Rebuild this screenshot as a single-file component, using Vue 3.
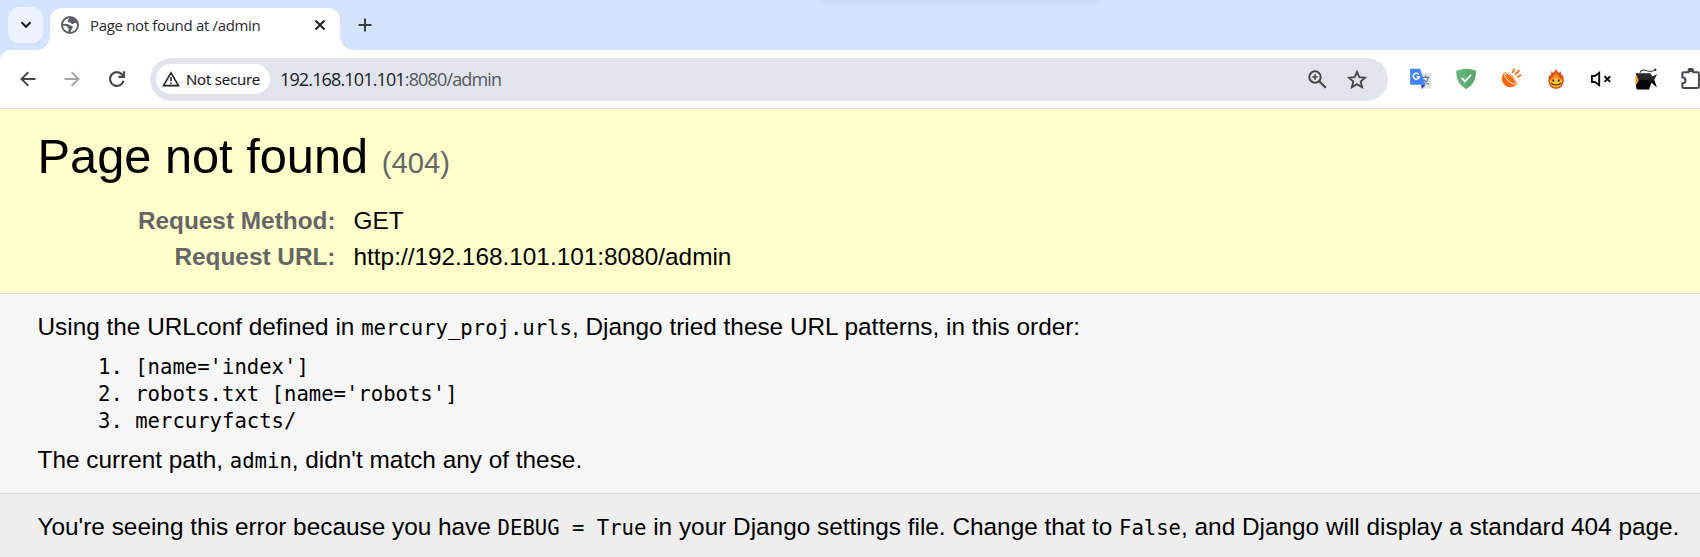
<script setup>
const patterns = ["[name='index']", "robots.txt [name='robots']", 'mercuryfacts/']
</script>

<template>
  <div class="window">
    <header class="tabstrip">
      <div class="shade"></div>
      <button class="tabsearch" aria-label="Search tabs">
        <svg width="12" height="12" viewBox="0 0 12 12"><path d="M1.500 3.200 6 7.700l4.500-4.500" fill="none" stroke="#1c1d20" stroke-width="2.100" /></svg>
      </button>
      <div class="tab">
        <svg class="curve left" width="14" height="14" viewBox="0 0 14 14"><path d="M14 0v14H0A14 14 0 0 0 14 0Z" fill="#fff" /></svg>
        <svg class="globe" width="18" height="18" viewBox="0 0 18 18">
          <circle cx="9" cy="9" r="9" fill="#5c6066" />
          <path d="M8.600 2.200C7.900 3.300 6.500 3.600 6.600 5c.1 1.200 1.200 1.300 2.500 1.400 1 .1.900 1.500 2.100 1.700 1.700.2 1.800-1.500 3.100-1.300 1.400.3 1.900 1.700 1.700 3.200-.5 3.200-2.900 5.600-6.200 6l.1-1.800c1.300-.5.900-1.800 1.800-2.600.5-1-.5-2-1.900-2.200C8.200 9.200 7.900 7.900 6 7.900H2.100C2.600 4.800 5 2.300 8.600 2.200Z" fill="#fff" />
          <path d="M2 9.800h2.700c1.400 0 1.700.8 1.800 1.700.1.900 1.300.9 1.300 1.900 0 .9-.6 1.200-.5 2.400C4.300 15.100 2.200 12.800 2 9.800Z" fill="#fff" />
        </svg>
        <span class="title">Page not found at /admin</span>
        <svg class="close" width="12" height="12" viewBox="0 0 12 12"><path d="m1.500 1.500 9 9m0-9-9 9" stroke="#1c1d20" stroke-width="1.900" /></svg>
        <svg class="curve right" width="14" height="14" viewBox="0 0 14 14"><path d="M0 0v14h14A14 14 0 0 1 0 0Z" fill="#fff" /></svg>
      </div>
      <svg class="plus" width="14" height="14" viewBox="0 0 14 14"><path d="M7 .5v13M.5 7h13" stroke="#3c4043" stroke-width="2" /></svg>
    </header>

    <nav class="toolbar">
      <svg class="back" width="16" height="16" viewBox="0 0 16 16"><path d="M15.500 8H2M8.300 1.200 1.500 8l6.800 6.800" fill="none" stroke="#46484b" stroke-width="2" /></svg>
      <svg class="forward" width="16" height="16" viewBox="0 0 16 16"><path d="M.5 8H14M7.700 1.200 14.500 8l-6.800 6.800" fill="none" stroke="#a5a6a8" stroke-width="2" /></svg>
      <svg class="reload" width="18" height="18" viewBox="0 0 18 18"><path d="M15.600 10.700A6.900 6.900 0 1 1 14.200 4.600L15.800 6.500M16 1.300v5.600h-5.600" fill="none" stroke="#46484b" stroke-width="2.200" /></svg>
      <div class="address">
        <div class="chip">
          <svg width="18" height="16" viewBox="0 0 18 16"><path d="M9 1.800 16.500 14.600h-15Z" fill="none" stroke="#1f2023" stroke-width="1.600" /><path d="M9 6v4.300M9 11.400v1.500" stroke="#1f2023" stroke-width="1.500" /></svg>
          <span>Not secure</span>
        </div>
        <div class="url"><b>192.168.101.101</b>:8080/admin</div>
        <svg class="magnify" width="19" height="19" viewBox="0 0 19 19"><g fill="none" stroke="#46484b" stroke-width="2"><circle cx="7" cy="7" r="5.700" /><path d="m11.200 11.200 6.600 6.600" stroke-width="2.300" /><path d="M7 4.200v5.600M4.200 7h5.600" stroke-width="1.600" /></g></svg>
        <svg class="star" width="20" height="19" viewBox="0 0 20 19"><path d="m10 1.900 2.300 5.300 5.800.5-4.400 3.800 1.400 5.700-5.100-3.100-5.100 3.100 1.400-5.700L1.900 7.700l5.800-.5Z" fill="none" stroke="#46484b" stroke-width="1.900" /></svg>
      </div>
      <div class="extensions">
        <svg width="22" height="22" viewBox="0 0 22 22">
          <path d="M8 5h12.300c.6 0 1 .4 1 1v13.600c0 .6-.4 1-1 1H11Z" fill="#dfe1e4" />
          <path d="m11 16.500 4.500.3-3.500 4.200Z" fill="#3646a8" />
          <path d="M12.500 9.300h7M15.700 7.500v1.800M18.300 9.500c-.5 3-2.300 5.100-4 6.300M14.200 11.800c1 2 2.700 3.500 4.600 4.500" fill="none" stroke="#607d8b" stroke-width="1.300" />
          <path d="M1.300.7h8.800l5.300 16.100H1.300c-.7 0-1.200-.5-1.200-1.200V1.900C.1 1.200.6.7 1.300.7Z" fill="#4285f4" />
          <path d="M8.700 6.400A3 3 0 1 0 9.300 8.800H6.500" fill="none" stroke="#fff" stroke-width="1.400" />
        </svg>
        <svg width="22" height="22" viewBox="0 0 22 22">
          <path d="M11 .8c3 0 6.500.7 9.700 2C20.900 11 18.500 16.800 11 21 3.500 16.800 1.100 11 1.300 2.800 4.500 1.500 8 .8 11 .8Z" fill="#67b279" />
          <path d="M11 .8c3 0 6.500.7 9.700 2C20.900 11 18.500 16.800 11 21Z" fill="#5ba96d" />
          <path d="m6.600 9.900 3.400 3.500 6-6.700" fill="none" stroke="#fff" stroke-width="1.700" />
        </svg>
        <svg width="22" height="22" viewBox="0 0 22 22">
          <g transform="translate(8.500 12.500) rotate(43)"><path d="M-8.500-2.500a8.500 8.500 0 0 0 17 0 8.500 3.600 0 0 0-17 0Z" fill="#ff6a0a" /><ellipse cx="0" cy="-2.500" rx="7.200" ry="2.700" fill="#ff6a0a" stroke="#fff" stroke-width=".9" /></g>
          <path d="m12.600 4.400 1.500-3M15.400 6.300l3.600-3.700M17.600 8.700l3-1.500" stroke="#ff6a0a" stroke-width="1.800" stroke-linecap="round" />
        </svg>
        <svg width="22" height="22" viewBox="0 0 22 22">
          <path d="M11 .5c.2 2.100 2.300 3 2.900 4.700L15.400 3c.5 2 .8 3.200 1.700 5l1.100-1.200c-.2 2 .7 3.100.4 6.400-.3 4.500-3.400 7.600-7.600 7.600s-7.300-3.100-7.600-7.600c-.2-2.600.7-3.800.5-6.400l1.200 1.500c.8-1.600 1.300-3.300 1.500-5.300l1.800 2.200C9 3.500 10.700 2.500 11 .5Z" fill="#df4b1c" />
          <path d="M11 4.200c1 2 2.300 2.500 3.100 4.300 2.300 1.500 3.600 3.300 3.200 5.700-.6 3.300-2.900 5.200-6.300 5.200s-5.700-1.900-6.300-5.200c-.4-2.400.8-4.200 3.200-5.700C8.800 7 10.500 6 11 4.200Z" fill="#f78a1d" />
          <path d="M4.900 13.500c1.900-2.300 4.100-3.500 6.100-3.500s4.400 1.200 6.100 3.500c-.2 3-2.700 5.400-6.100 5.400s-5.900-2.400-6.100-5.400Z" fill="#ffc42e" />
          <ellipse cx="8.300" cy="12.500" rx=".9" ry="1.300" fill="#222" /><ellipse cx="13.700" cy="12.500" rx=".9" ry="1.300" fill="#222" />
          <path d="M5.800 14.800c2.600 2.900 7.800 2.900 10.400 0" fill="none" stroke="#30230d" stroke-width="1.100" />
        </svg>
        <svg width="22" height="22" viewBox="0 0 22 22">
          <path d="M1.900 8h3l4.300-3.200v12.400L4.900 14h-3Z" fill="none" stroke="#0c0c0c" stroke-width="1.900" />
          <path d="m14.500 8.300 5.700 5.600m0-5.600-5.700 5.600" stroke="#0c0c0c" stroke-width="1.900" />
        </svg>
        <svg width="22" height="22" viewBox="0 0 22 22">
          <path d="M.5 7.500v9L5 12Z" fill="#ff9820" />
          <path d="M.6 5.400h14.500l2.300 3.400 4.500-2.500-2.700 5.200 2.700 8-5.400-4.700-2.500 6.700H1.700L.8 17.200 4 12Z" fill="#050505" />
          <path d="M.6 5.400h14.500l2.300 3.400 4.500-2.500-2.700 5.200L4 12Z" fill="#292929" />
          <path d="M5 4.600c.8-2.500 3.500-2.800 6-2.100s5 2.200 9-.6" fill="none" stroke="#444" stroke-width="1.100" />
          <circle cx="20.200" cy="1.700" r="1.200" fill="#333" />
        </svg>
        <svg width="22" height="22" viewBox="0 0 22 22">
          <path d="M2.700 4.200h4.800V3a2.300 2.300 0 0 1 4.600 0v1.200h4.400c.9 0 1.400.5 1.400 1.400v13c0 .9-.5 1.400-1.400 1.400H2.700c-.9 0-1.400-.5-1.400-1.400v-3.100c2-.3 3.200-1.400 3.200-3.100S3.300 9.600 1.300 9.300V5.600c0-.9.5-1.400 1.400-1.400Z" fill="none" stroke="#46484b" stroke-width="2" />
          <path d="M7.500 4V3a2.300 2.300 0 0 1 4.600 0v1Z" fill="#46484b" />
        </svg>
      </div>
    </nav>

    <main>
      <section class="summary">
        <h1>Page not found <span>(404)</span></h1>
        <dl>
          <dt>Request Method:</dt><dd>GET</dd>
          <dt>Request URL:</dt><dd>http://192.168.101.101:8080/admin</dd>
        </dl>
      </section>
      <section class="info">
        <p>Using the URLconf defined in <code>mercury_proj.urls</code>, Django tried these URL patterns, in this order:</p>
        <ol>
          <li v-for="(p, i) in patterns" :key="p">{{ i + 1 }}. {{ p }}</li>
        </ol>
        <p>The current path, <code>admin</code>, didn't match any of these.</p>
      </section>
      <section class="explanation">
        <p>You're seeing this error because you have <code>DEBUG = True</code> in your Django settings file. Change that to <code>False</code>, and Django will display a standard 404 page.</p>
      </section>
    </main>
  </div>
</template>

<style>
html, body { overflow: hidden; }
</style>

<style scoped>
* { box-sizing: border-box; margin: 0; padding: 0; }
svg { display: block; flex: none; }
.window { display: flex; flex-direction: column; width: 1700px; height: 557px; overflow: hidden; background: #d3e3fd; font-family: "Open Sans", sans-serif; }
.tabstrip { position: relative; display: flex; flex: none; height: 50px; padding-left: 8px; }
.shade { position: absolute; left: 824px; top: -10px; width: 272px; height: 10px; box-shadow: 0 0 5px 2px rgba(80, 110, 160, .12); }
.tabsearch { display: flex; align-items: center; justify-content: center; width: 35px; height: 36px; margin-top: 7px; border: 0; border-radius: 11px; background: #ecf3fe; }
.tab { position: relative; display: flex; align-items: center; width: 290px; height: 42px; margin: 8px 0 0 7px; padding: 0 14px 8px 11px; border-radius: 12px 12px 0 0; background: #fff; }
.curve { position: absolute; bottom: 0; }
.curve.left { left: -14px; }
.curve.right { right: -14px; }
.title { margin-left: 11px; font-size: 15px; line-height: 20px; letter-spacing: -.33px; color: #2a2b2e; white-space: nowrap; }
.close { margin-left: auto; }
.plus { margin: 18px 0 0 18px; }
.toolbar { display: flex; flex: none; align-items: center; height: 59px; padding: 0 0 1px 20px; border-bottom: 1px solid #dcdee3; border-radius: 10px 0 0 0; background: #fff; }
.forward { margin-left: 28px; }
.reload { margin-left: 28px; }
.address { display: flex; flex: none; align-items: center; width: 1238px; height: 43px; margin: 1px 0 0 24px; padding-left: 6px; border-radius: 22px; background: #e1e4ec; }
.chip { display: flex; align-items: center; width: 114px; height: 30px; padding-left: 6px; border-radius: 15px; background: #fff; }
.chip span { margin-left: 6px; font-size: 15px; line-height: 20px; letter-spacing: -.2px; color: #1f2023; white-space: nowrap; -webkit-text-stroke: .2px #1f2023; }
.url { margin-left: 10px; font-size: 18px; line-height: 24px; letter-spacing: -.86px; color: #54575c; white-space: nowrap; }
.url b { font-weight: 400; color: #202124; }
.magnify { margin-left: auto; }
.star { margin: 0 21px 0 20px; }
.extensions { display: flex; gap: 23.200px; margin-left: 21.500px; }
main { font-family: "Liberation Sans", Arial, sans-serif; font-size: 24.375px; line-height: 28px; color: #000; }
section { padding: 18.75px 37.5px; }
.summary { height: 185px; border-bottom: 1px solid #dcdcdc; background: #ffc; }
h1 { font-size: 48.75px; font-weight: 400; line-height: 56px; }
h1 span { font-size: 29.25px; color: #666; }
dl { display: grid; grid-template-columns: 298px auto; column-gap: 18px; margin-top: 12.5px; line-height: 36px; }
dt { font-weight: 700; text-align: right; color: #666; }
.info { height: 200px; border-bottom: 1px solid #dcdcdc; background: #f6f6f6; }
.explanation { height: 63px; background: #eee; }
p { height: 28px; white-space: nowrap; }
code, ol { font-family: "DejaVu Sans Mono", monospace; font-size: 20.6px; }
code { line-height: 1; }
ol { margin: 13.300px 0 10.500px; padding-left: 60.5px; line-height: 27px; list-style: none; }
li { white-space: pre; }
</style>
